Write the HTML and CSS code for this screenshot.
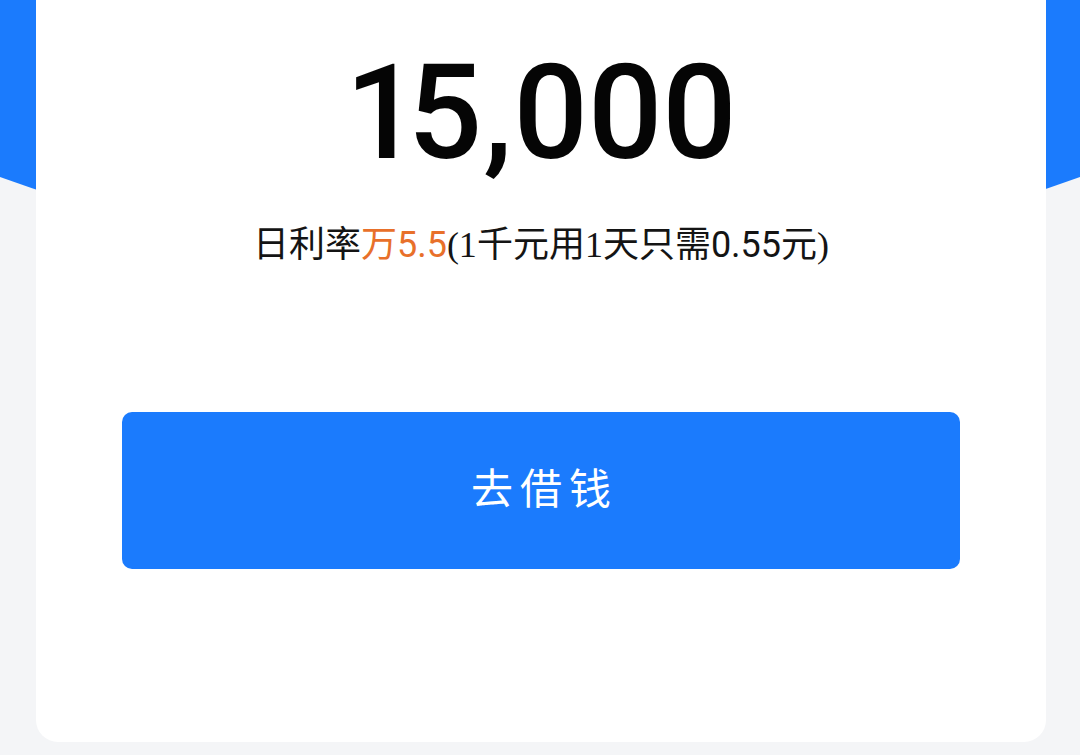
FILE: index.html
```html
<!DOCTYPE html>
<html lang="zh-CN">
<head>
<meta charset="utf-8">
<title>借钱</title>
<link rel="stylesheet" href="styles.css">
</head>
<body>
<div class="page">
  <div class="hero-bg">
    <svg class="hero-shape" viewBox="0 0 1080 300" preserveAspectRatio="none" aria-hidden="true">
      <path d="M0 0 H1080 V177 Q540 372 0 177 Z" fill="#1b7bfd"/>
    </svg>
  </div>
  <main class="card">
    <div class="amount"><span class="digit-one">1</span>5<span class="comma">,</span>000</div>
    <p class="rate">日利率<span class="rate-hl">万5.5</span><span class="serif">(1</span>千元用<span class="serif">1</span>天只需0.55元<span class="serif">)</span></p>
    <button class="borrow-btn" type="button">去借钱</button>
  </main>
</div>
</body>
</html>
```

FILE: styles.css
```css
html, body {
  margin: 0;
  padding: 0;
}

body {
  width: 1080px;
  height: 755px;
  overflow: hidden;
  background: #f4f5f7;
  font-family: "Roboto", "Noto Sans CJK SC", sans-serif;
}

.page {
  display: grid;
}

.hero-bg {
  grid-area: 1 / 1;
  height: 300px;
}

.hero-shape {
  display: block;
  width: 100%;
  height: 100%;
}

.card {
  grid-area: 1 / 1;
  margin: -40px 34px 0 36px;
  padding: 88px 86px 173px;
  background: #ffffff;
  border-radius: 22px;
  display: flex;
  flex-direction: column;
  align-items: stretch;
}

.amount {
  font-family: "Roboto", sans-serif;
  font-weight: 500;
  font-size: 131px;
  line-height: 131px;
  text-align: center;
  color: #050505;
}

.digit-one {
  letter-spacing: -12px;
}

.comma {
  margin: 0 1px;
}

.rate {
  margin: 46px 0 0;
  font-family: "Roboto", "Noto Sans CJK SC", sans-serif;
  font-size: 36px;
  line-height: 40px;
  text-align: center;
  color: #141414;
  white-space: nowrap;
}

.rate-hl {
  color: #e8702a;
}

.serif {
  font-family: "Liberation Serif", "Noto Sans CJK SC", serif;
}

.borrow-btn {
  margin-top: 147px;
  height: 157px;
  border: none;
  border-radius: 10px;
  background: #1b7bfd;
  color: #ffffff;
  font-family: "Noto Sans CJK SC", sans-serif;
  font-size: 42px;
  font-weight: 400;
  letter-spacing: 7px;
  padding: 0 0 10px 7px;
  cursor: pointer;
}
```
